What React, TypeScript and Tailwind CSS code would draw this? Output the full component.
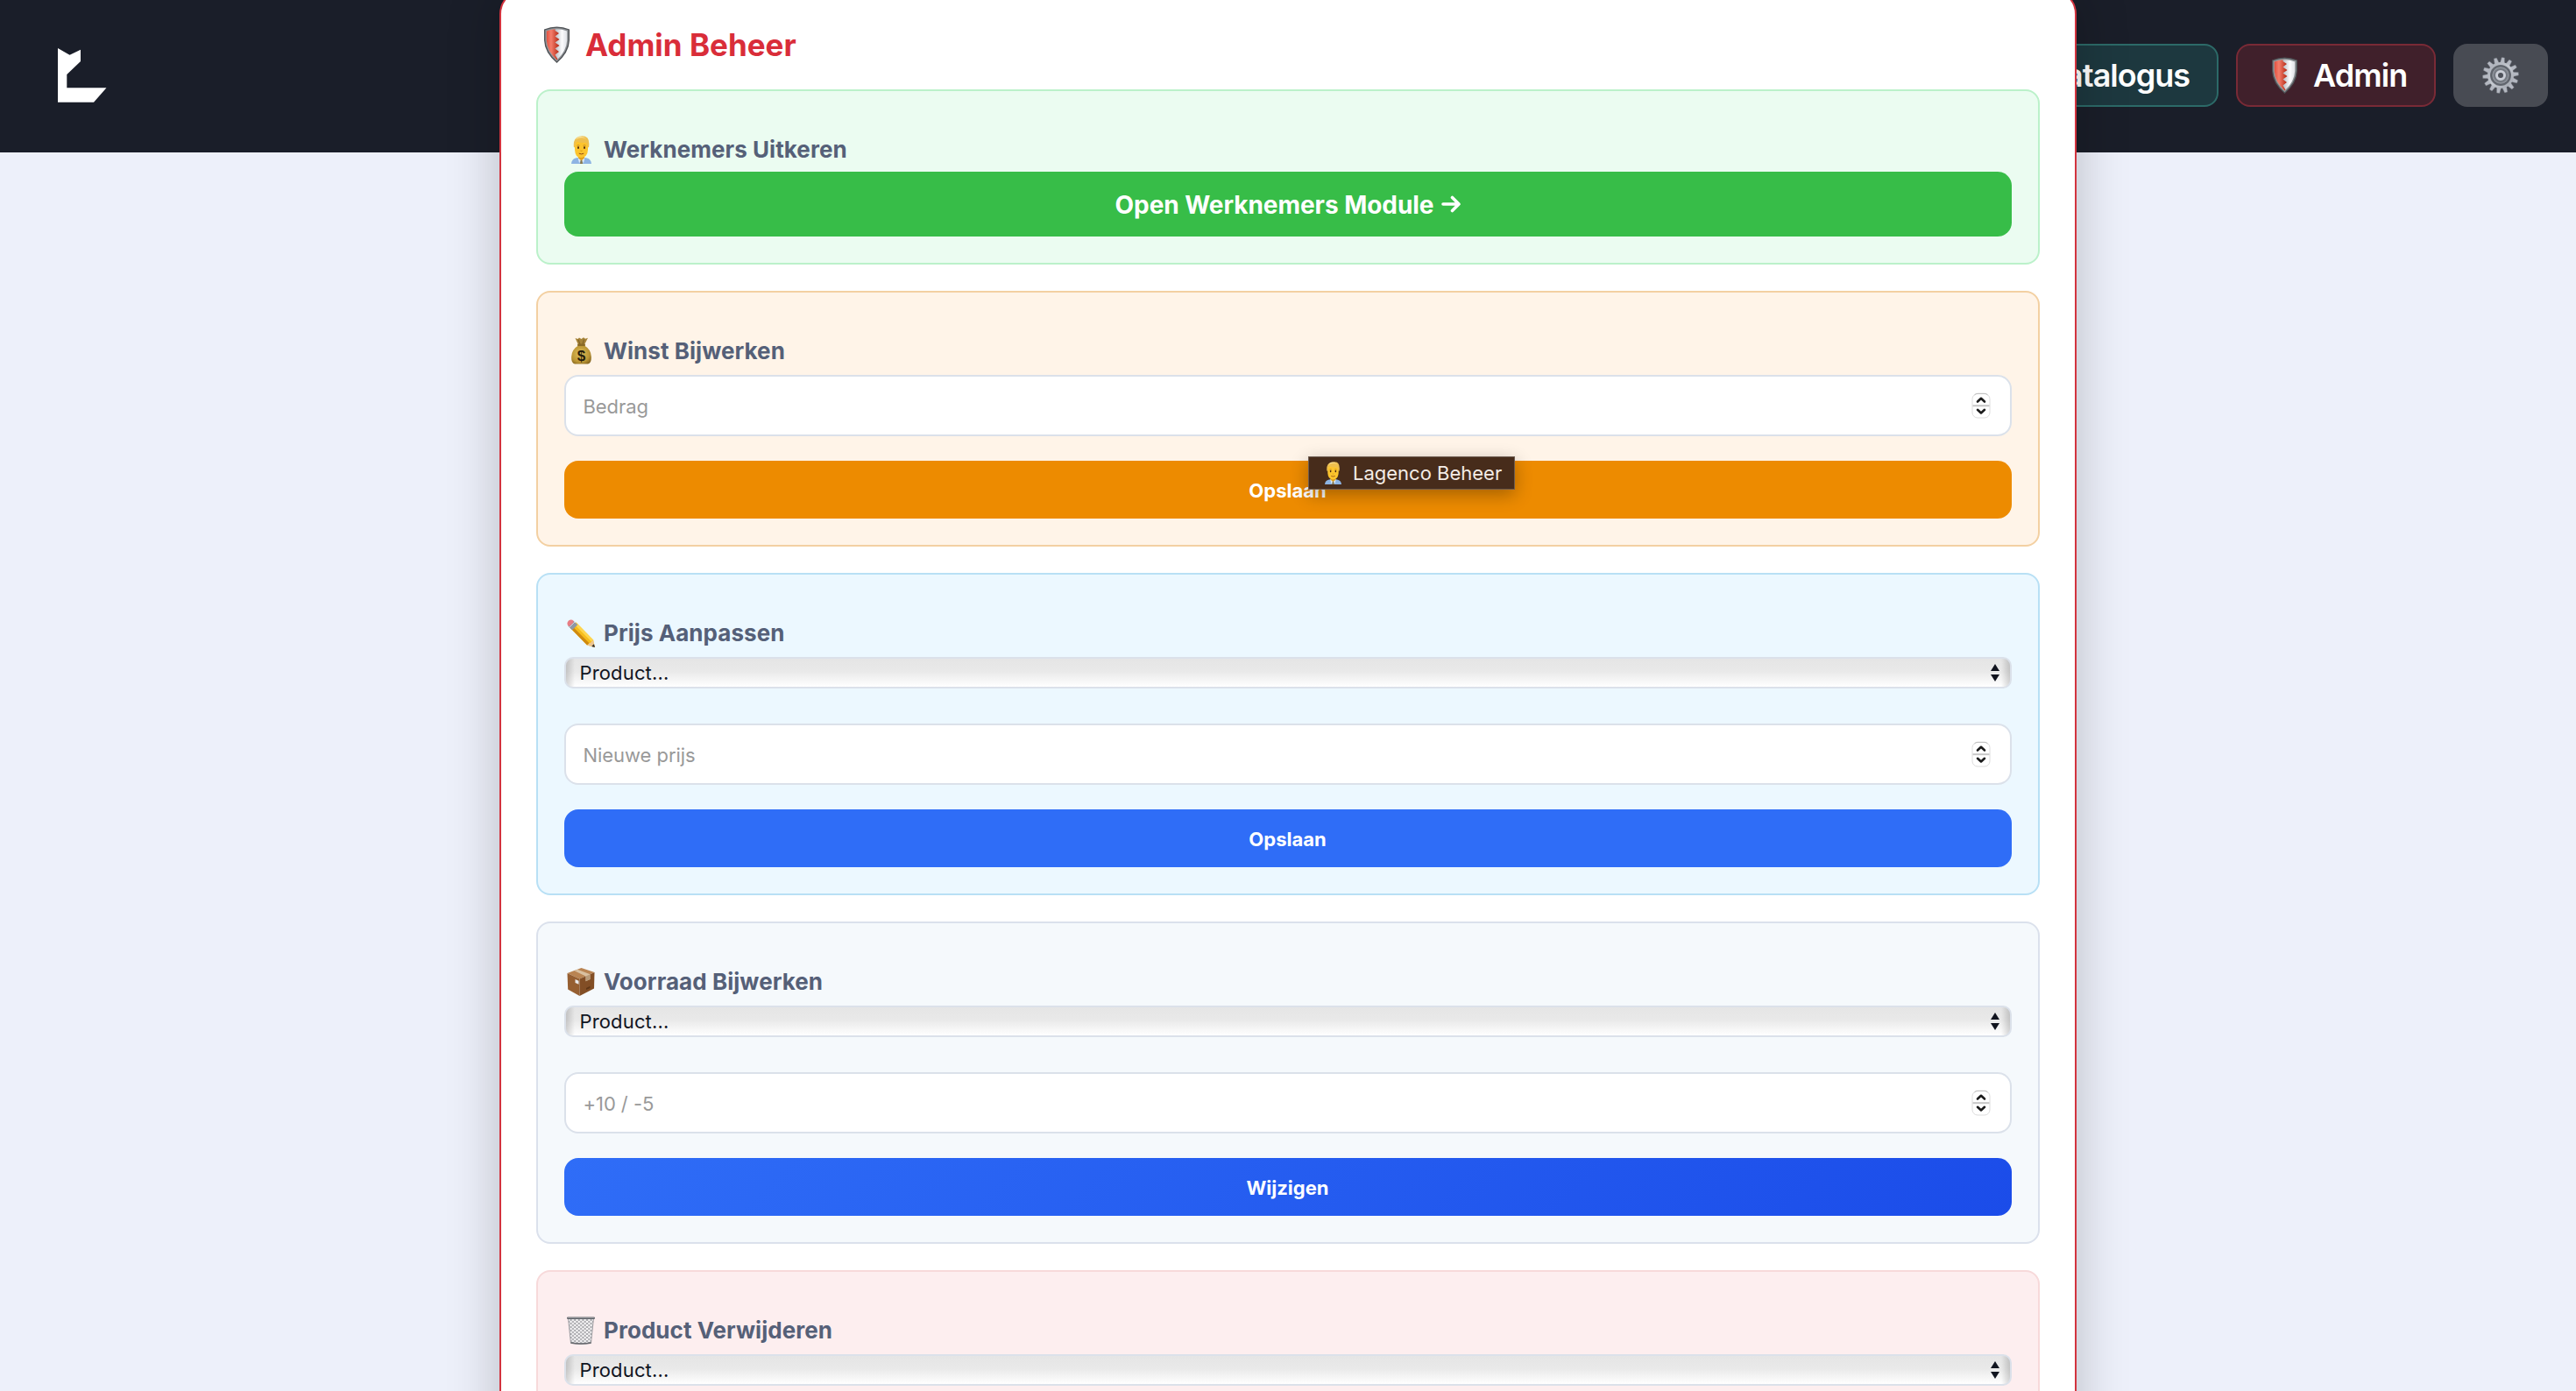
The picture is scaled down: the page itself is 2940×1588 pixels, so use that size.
import { useId } from "react";
import type { ReactNode } from "react";

function Logo() {
  return (
    <svg className="h-[62px] w-14" viewBox="0 0 56 62" fill="#fff">
      <path d="M0 0 13.5 7.7 26 1.7V15L10.3 30V45.3H55.5L41 61.7H0Z" />
    </svg>
  );
}

function Shield() {
  const id = useId();
  return (
    <svg className="h-[42px] w-[29px] shrink-0" viewBox="0 0 29 42">
      <defs>
        <linearGradient id={id + "r"} x1="0" x2="1" y1="0" y2="0">
          <stop offset="0" stopColor="#e2503f" />
          <stop offset=".35" stopColor="#f47e6c" />
          <stop offset="1" stopColor="#b3240f" />
        </linearGradient>
        <linearGradient id={id + "w"} x1="0" x2="1" y1="0" y2="0">
          <stop offset="0" stopColor="#b4b7bd" />
          <stop offset=".4" stopColor="#b4b7bd" />
          <stop offset=".75" stopColor="#fbfbfd" />
          <stop offset="1" stopColor="#dfe1e6" />
        </linearGradient>
      </defs>
      <path d="M0 3.500Q14.500-2.500 29 3.500V16Q28.500 30 14.500 42Q.5 30 0 16Z" fill="#4e5155" />
      <path d="M1.300 4.300Q14.500-1 27.700 4.300V16Q27 29 14.500 40.300Q2 29 1.300 16Z" fill="#8d9195" />
      <path d="M2.800 5.500Q14.500 1 26.200 5.500V16Q25.500 28.500 14.500 38.500Q3.500 28.500 2.800 16Z" fill={`url(#${id}w)`} />
      <path
        d="M2.800 5.500Q7.500 3.400 12.500 3.200V5L17 8 12.500 11.500 17.500 15 12.500 18.500 17.500 22 12.500 25.500 17 29 12.500 32.500 15.500 37.500 14.500 38.500Q3.500 28.500 2.800 16Z"
        fill={`url(#${id}r)`}
      />
    </svg>
  );
}

function Gear() {
  const id = useId();
  return (
    <svg className="size-[42px]" viewBox="-21 -21 42 42">
      <defs>
        <linearGradient id={id} x1="0" x2="1" y1="0" y2="1">
          <stop offset="0" stopColor="#a3a8b1" />
          <stop offset=".5" stopColor="#c6cad1" />
          <stop offset="1" stopColor="#9da1aa" />
        </linearGradient>
      </defs>
      {Array.from({ length: 14 }, (_, i) => (
        <path
          key={i}
          d="M-2.600-14 -1.700-20.500H1.700L2.600-14Z"
          fill="#b4b8c1"
          stroke="#6c7078"
          strokeWidth=".4"
          transform={`rotate(${(i * 360) / 14 + 8})`}
        />
      ))}
      <circle r="15" fill={`url(#${id})`} />
      <circle r="12" fill="#666b73" />
      <circle r="10.300" fill="#8b9098" stroke="#50545c" strokeWidth=".8" />
      <circle r="8" fill="#747981" />
      <circle r="4.500" fill="#4d5159" stroke="#c9cdd5" strokeWidth="3" />
    </svg>
  );
}

function Man({ className }: { className: string }) {
  return (
    <svg className={className} viewBox="0 0 23 32" preserveAspectRatio="none">
      <path d="M0 32Q.5 26.500 5 25.500L11.500 24 18 25.500Q22.500 26.500 23 32Z" fill="#8db4e3" />
      <path d="M8 21H15V26L11.500 29 8 26Z" fill="#e0a01c" />
      <path d="M7.500 25 11.500 28.500 9 31ZM15.500 25 11.500 28.500 14 31Z" fill="#dbe9f8" />
      <path d="M10.600 28H12.400L13 32H10Z" fill="#8a7a4d" />
      <path d="M4 10Q4 5 11.500 5T19 10V16Q18.500 24.500 11.500 25T4 16Z" fill="#fcc42d" />
      <path d="M2.900 13Q1.800 2.500 9 .8Q15-.8 18.500 2.500Q21 5.500 20.100 13L18.600 13.500Q18.800 9.500 17 8Q10 8.500 6 6.500Q4.400 9 4.400 13.500Z" fill="#eebf4e" />
      <path d="M5 4.500Q10 .5 17.500 3.500Q11-.8 6.500 2.500Z" fill="#fae29a" />
      <ellipse cx="8" cy="13.500" rx="1" ry="1.500" fill="#4b2a10" />
      <ellipse cx="15" cy="13.500" rx="1" ry="1.500" fill="#4b2a10" />
      <path d="M6.500 11.200Q8 10.200 9.500 11.200M13.500 11.200Q15 10.200 16.500 11.200" fill="none" stroke="#a8701a" strokeWidth=".7" />
      <path d="M10.500 17Q11.500 17.800 12.500 17" fill="none" stroke="#c98a13" strokeWidth=".8" />
      <path d="M8.800 20.200Q11.500 21.600 14.200 20.200" fill="none" stroke="#8f4a12" strokeWidth="1" />
    </svg>
  );
}

function MoneyBag() {
  const id = useId();
  return (
    <svg className="h-[31px] w-[23px]" viewBox="0 0 23 31">
      <defs>
        <radialGradient id={id} cx=".45" cy=".45" r=".65">
          <stop offset="0" stopColor="#dfc05c" />
          <stop offset=".7" stopColor="#bb9534" />
          <stop offset="1" stopColor="#86661f" />
        </radialGradient>
      </defs>
      <path d="M4.500 1 7.500 2 9 .5 11.500 2 14 .3 16 1.800 19 .8 15 8.500H8Z" fill="#a68338" />
      <path d="M8 2.500 10 8M14.500 2.500 13 8" stroke="#6f5420" strokeWidth=".8" />
      <path d="M8 9.500H15Q22.500 14 22.800 22Q23.300 30 19 30.500H4Q-.3 30 .2 22Q.5 14 8 9.500Z" fill={`url(#${id})`} />
      <rect x="7" y="7.500" width="9" height="2.600" rx="1.200" fill="#8a6a26" />
      <text x="11.500" y="26.500" textAnchor="middle" fontFamily="Liberation Sans" fontSize="17" fontWeight="700" fill="#241b0a">
        $
      </text>
    </svg>
  );
}

function Pencil() {
  return (
    <svg className="size-8" viewBox="0 0 32 32">
      <path d="M10.500 3.500 30 23.500 32 32 23 29.500 3.500 9.500Z" fill="#f6bd1b" />
      <path d="M10.500 3.500 30 23.500 28 25.600 8.500 5.800Z" fill="#ffd64d" />
      <path d="M5.800 7.400 25.500 27.300 23 29.500 3.500 9.500Z" fill="#cf8a10" />
      <path d="M30 23.500 32 32 23 29.500Q24.500 28.500 25.500 27.300 27.500 27 28 25.600 29.500 25 30 23.500Z" fill="#edc691" />
      <path d="M30.800 28.200 32 32 28.200 31Z" fill="#2d2b2c" />
      <path d="M7.500 1.800 12.300 6.200 6 12.200 1.500 7.800Z" fill="#8e97a5" />
      <path d="M9 3 3 9" stroke="#cfd5de" strokeWidth="1" />
      <path d="M7.800 1.900Q5-.7 2 1.500Q-1 4.500 1.600 7.800Q2.800 8.300 5.200 6T7.800 1.900Z" fill="#e87d84" />
    </svg>
  );
}

function Package() {
  return (
    <svg className="size-8" viewBox="0 0 32 32">
      <path d="M.5 6 16.500 0 31.500 5 14.500 12.500Z" fill="#b98452" />
      <path d="M.5 6 14.500 12.500V32L1.200 24.500Z" fill="#965f31" />
      <path d="M14.500 12.500 31.500 5 31 23.500 14.500 32Z" fill="#824e25" />
      <path d="M8.500 3.200 12 1.800 26.500 7.200V13L21.500 15.200V9.600Z" fill="#d9c0a0" />
      <path d="M21.500 9.600 26.500 7.200V13L21.500 15.200Z" fill="#b89a78" />
      <path d="M9.500 13 13.500 14.800V18.800L9.500 17Z" fill="#e9e9e9" />
      <path d="M22 23 26.500 20.800V23L22 25Z" fill="#5f3616" />
    </svg>
  );
}

function Wastebasket() {
  const id = useId();
  return (
    <svg className="size-8" viewBox="0 0 32 32">
      <defs>
        <pattern id={id} width="4.600" height="4" patternUnits="userSpaceOnUse">
          <path d="M0 0 4.600 4M4.600 0 0 4" stroke="#75777c" strokeWidth=".65" />
        </pattern>
      </defs>
      <path d="M1.500 2H30.500L27.500 30.500Q16 32.500 4.500 30.500Z" fill="#fbfafb" />
      <path d="M1.500 2H30.500L27.500 30.500Q16 32.500 4.500 30.500Z" fill={`url(#${id})`} stroke="#8a8c91" strokeWidth=".8" />
      <path d="M4.500 29Q16 31.500 27.500 29V30.800Q16 32.800 4.500 30.800Z" fill="#66686d" />
      <rect x="0" y=".5" width="32" height="2.600" rx="1.300" fill="#5d6066" />
      <rect x="1" y="1" width="30" height=".8" rx=".4" fill="#a5a8ad" />
    </svg>
  );
}

function Heading({ icon, children, className = "h-16 pt-[9px]" }: { icon: ReactNode; children: string; className?: string }) {
  return (
    <h3 className={`flex items-center text-[26px] leading-none font-bold tracking-[0.05px] text-[#556078] ${className}`}>
      <span className="mr-[9px] ml-0.5 flex w-[34px] justify-center">{icon}</span>
      {children}
    </h3>
  );
}

function NumberField({ placeholder }: { placeholder: string }) {
  return (
    <div className="flex h-[70px] items-center justify-between rounded-2xl border-2 border-[#dbe1ea] bg-white pr-[21px] pl-[19.5px] text-[22px] tracking-[-0.05px] text-[#999]">
      <span className="pt-0.5">{placeholder}</span>
      <svg className="mb-px h-8 w-6" viewBox="0 0 24 32" fill="none">
        <rect x="2" y="2.500" width="20" height="27.500" rx="6" fill="#fff" stroke="#dcdcdc" />
        <path d="M4.500 4Q6 2.300 8 2.300H16Q18 2.300 19.500 4" stroke="#bdbdbd" />
        <path d="M2.500 16.200H21.500" stroke="#c6c6c6" strokeWidth="2" />
        <path d="M8 11.500 12 7.800 16 11.500M8 20.800 12 24.500 16 20.800" stroke="#1b1b1b" strokeWidth="2.600" strokeLinecap="round" strokeLinejoin="round" />
      </svg>
    </div>
  );
}

function Select({ className = "" }: { className?: string }) {
  return (
    <div
      className={`flex h-9 items-center justify-between rounded-[10px] border-2 border-[#dbe1ea] bg-[linear-gradient(90deg,rgba(0,0,0,0.16),transparent_10px,transparent_calc(100%-10px),rgba(0,0,0,0.16)),linear-gradient(180deg,#e5e5e5,#e9e9e9_45%,#ffffff)] pr-3 pl-[15.5px] text-[22px] tracking-[0.15px] text-[#11141f] ${className}`}
    >
      {children_label}
      <svg className="h-5 w-[10px]" viewBox="0 0 10 20" fill="#11141f">
        <path d="M5 0 10 8H0ZM5 20 10 12H0Z" />
      </svg>
    </div>
  );
}

const children_label = "Product...";

function Button({ className, children }: { className: string; children: string }) {
  return (
    <button className={`mt-7 flex h-[66px] w-full items-center justify-center rounded-2xl pt-px pr-px text-[22px] font-bold text-white ${className}`}>
      {children}
    </button>
  );
}

function Card({ className, children }: { className: string; children: ReactNode }) {
  return <section className={`rounded-2xl border-2 px-[30px] pt-[30px] pb-[30px] ${className}`}>{children}</section>;
}

export default function App() {
  return (
    <div className="relative h-[1588px] overflow-hidden bg-[#edf0fa] font-['Inter',sans-serif] leading-none">
      <header className="flex h-[174px] items-start justify-between bg-[#1a1e29] pt-[50px] pr-8 pl-[66px]">
        <div className="pt-[5px]">
          <Logo />
        </div>
        <nav className="flex gap-5 text-[36px] font-semibold text-white">
          <div className="flex h-[72px] items-center rounded-2xl border-2 border-[#2c6a68] bg-[#1d383f] pr-[31px] pl-8 tracking-[-1px]">
            Catalogus
          </div>
          <div className="flex h-[72px] w-[228px] items-center rounded-2xl border-2 border-[#792a36] bg-[#40202b] pl-[39px]">
            <Shield />
            <span className="ml-[18px] tracking-[-0.95px]">Admin</span>
          </div>
          <div className="flex h-[72px] w-[108px] items-center justify-center rounded-2xl bg-[#484b53]">
            <Gear />
          </div>
        </nav>
      </header>

      <main className="absolute -top-3 left-[570px] w-[1800px] rounded-[28px] border-2 border-[#d2333e] bg-white px-10 pt-[22px] pb-10 shadow-[0_0_60px_rgba(0,0,0,0.22)]">
        <h2 className="mb-3 flex h-[78px] items-center pl-[9px] text-[35px] font-bold text-[#d92d39]">
          <Shield />
          <span className="ml-[18px]">Admin Beheer</span>
        </h2>

        <div className="flex flex-col gap-[30px]">
          <Card className="border-[#bbf1ca] bg-[#ebfcf1]">
            <Heading icon={<Man className="h-8 w-[23px]" />} className="h-[62px] pt-[11px]">
              Werknemers Uitkeren
            </Heading>
            <button className="flex h-[74px] w-full items-center justify-center rounded-2xl bg-[#37bd48] pt-px text-[28px] font-bold tracking-[-0.05px] text-white">
              Open Werknemers Module
              <svg className="mb-px ml-[9px] h-5 w-[22px]" viewBox="0 0 22 20" fill="none" stroke="#fff" strokeWidth="3.600" strokeLinecap="round" strokeLinejoin="round">
                <path d="M2 10H20M12.500 2.500 20 10 12.500 17.500" />
              </svg>
            </button>
          </Card>

          <Card className="border-[#f3d0a2] bg-[#fff4e8]">
            <Heading icon={<MoneyBag />}>Winst Bijwerken</Heading>
            <NumberField placeholder="Bedrag" />
            <Button className="bg-[#ed8b00]">Opslaan</Button>
          </Card>

          <Card className="border-[#b8e0f5] bg-[#ecf8ff]">
            <Heading icon={<Pencil />}>Prijs Aanpassen</Heading>
            <Select className="mb-10" />
            <NumberField placeholder="Nieuwe prijs" />
            <Button className="bg-[#2f6df7]">Opslaan</Button>
          </Card>

          <Card className="border-[#dbe1ec] bg-[#f5f9fc]">
            <Heading icon={<Package />}>Voorraad Bijwerken</Heading>
            <Select className="mb-10" />
            <NumberField placeholder="+10 / -5" />
            <Button className="bg-[linear-gradient(135deg,#2f6df7,#1b4ce9)]">Wijzigen</Button>
          </Card>

          <Card className="border-[#f7d9da] bg-[#fdeeef]">
            <Heading icon={<Wastebasket />}>Product Verwijderen</Heading>
            <Select className="mb-10" />
          </Card>
        </div>
      </main>

      <div className="absolute top-[521px] left-[1493px] flex h-[38px] w-[236px] items-center border border-[#6d5d52] bg-[#472c1b] pl-[18px] text-[22px] text-[#f4ece6] shadow-[0_6px_20px_rgba(0,0,0,0.3)]">
        <Man className="h-[26px] w-[19px]" />
        <span className="ml-[13px]">Lagenco Beheer</span>
      </div>
    </div>
  );
}
